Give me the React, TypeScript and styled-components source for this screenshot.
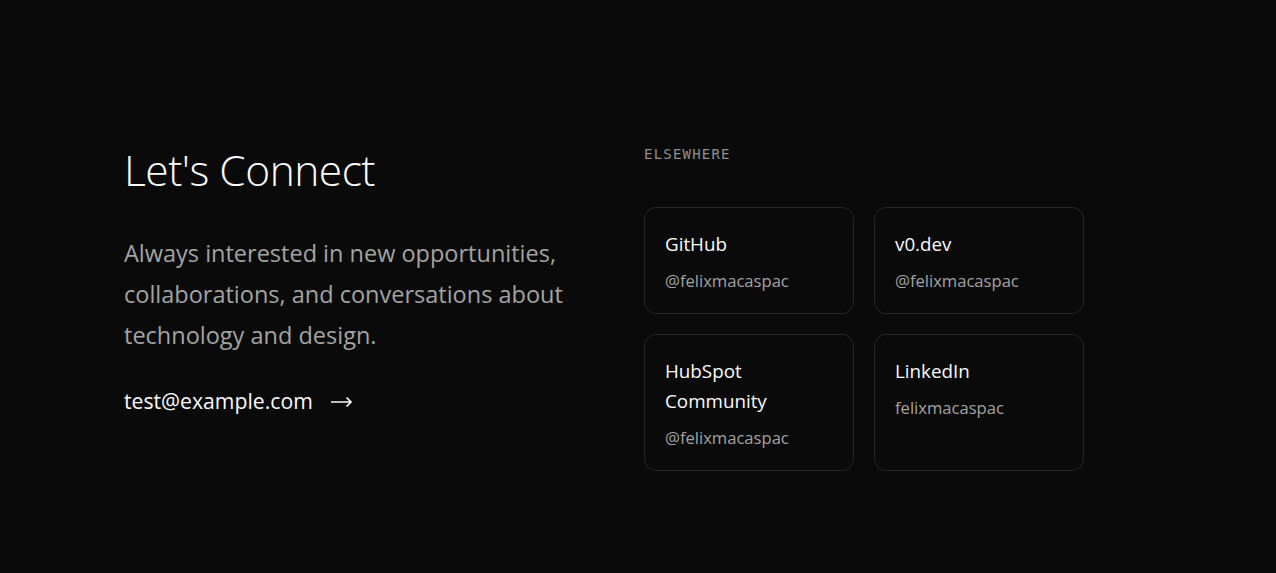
import React from "react";
import styled, { createGlobalStyle } from "styled-components";

const Global = createGlobalStyle`
  html, body { margin: 0; padding: 0; background: #0a0a0a; }
  body { font-family: "Open Sans", "Noto Sans", sans-serif; color: #fafafa; }
  * { box-sizing: border-box; }
`;

const Page = styled.section`
  min-height: 573px;
  padding: 140px 124px 0 124px;
  display: flex;
`;

const Left = styled.div`
  width: 520px;
  display: flex;
  flex-direction: column;
  align-items: flex-start;
`;

const Heading = styled.h2`
  margin: 0;
  font-size: 42.5px;
  font-weight: 300;
  line-height: 60px;
  letter-spacing: -0.5px;
  color: #fafafa;
`;

const Lead = styled.p`
  margin: 33px 0 0 0;
  font-size: 23.5px;
  line-height: 41px;
  color: #a3a3a3;
  max-width: 460px;
`;

const EmailLink = styled.a`
  margin-top: 30px;
  display: inline-flex;
  align-items: center;
  gap: 18px;
  font-size: 21.2px;
  line-height: 30px;
  color: #fafafa;
  text-decoration: none;
`;

const Arrow = styled.svg`
  width: 21px;
  height: 12px;
  margin-top: 1px;
`;

const Right = styled.div`
  display: flex;
  flex-direction: column;
`;

const Label = styled.div`
  font-family: "DejaVu Sans Mono", "Liberation Mono", monospace;
  font-size: 14px;
  letter-spacing: 1.2px;
  color: #8f8f8f;
  line-height: 20px;
  margin-top: 4px;
`;

const Grid = styled.div`
  margin-top: 43px;
  display: grid;
  grid-template-columns: 210px 210px;
  gap: 20px;
`;

const Card = styled.a`
  display: flex;
  flex-direction: column;
  padding: 21px 20px 20px 20px;
  border: 1px solid #262626;
  border-radius: 12px;
  text-decoration: none;
`;

const CardTitle = styled.div`
  font-size: 18.8px;
  line-height: 30px;
  color: #fafafa;
`;

const CardSub = styled.div`
  margin-top: 10px;
  font-size: 16.6px;
  line-height: 24px;
  color: #a3a3a3;
`;

const links = [
  { title: "GitHub", sub: "@felixmacaspac" },
  { title: "v0.dev", sub: "@felixmacaspac" },
  { title: "HubSpot Community", sub: "@felixmacaspac" },
  { title: "LinkedIn", sub: "felixmacaspac" },
];

export default function App() {
  return (
    <>
      <Global />
      <Page>
        <Left>
          <Heading>Let's Connect</Heading>
          <Lead>
            Always interested in new opportunities, collaborations, and
            conversations about technology and design.
          </Lead>
          <EmailLink href="#">
            test@example.com
            <Arrow viewBox="0 0 21 12" fill="none" stroke="#fafafa" strokeWidth="1.6">
              <path d="M0 6h20M15.5 1.5l4.5 4.5-4.5 4.5" />
            </Arrow>
          </EmailLink>
        </Left>
        <Right>
          <Label>ELSEWHERE</Label>
          <Grid>
            {links.map((l) => (
              <Card key={l.title} href="#">
                <CardTitle>{l.title}</CardTitle>
                <CardSub>{l.sub}</CardSub>
              </Card>
            ))}
          </Grid>
        </Right>
      </Page>
    </>
  );
}
